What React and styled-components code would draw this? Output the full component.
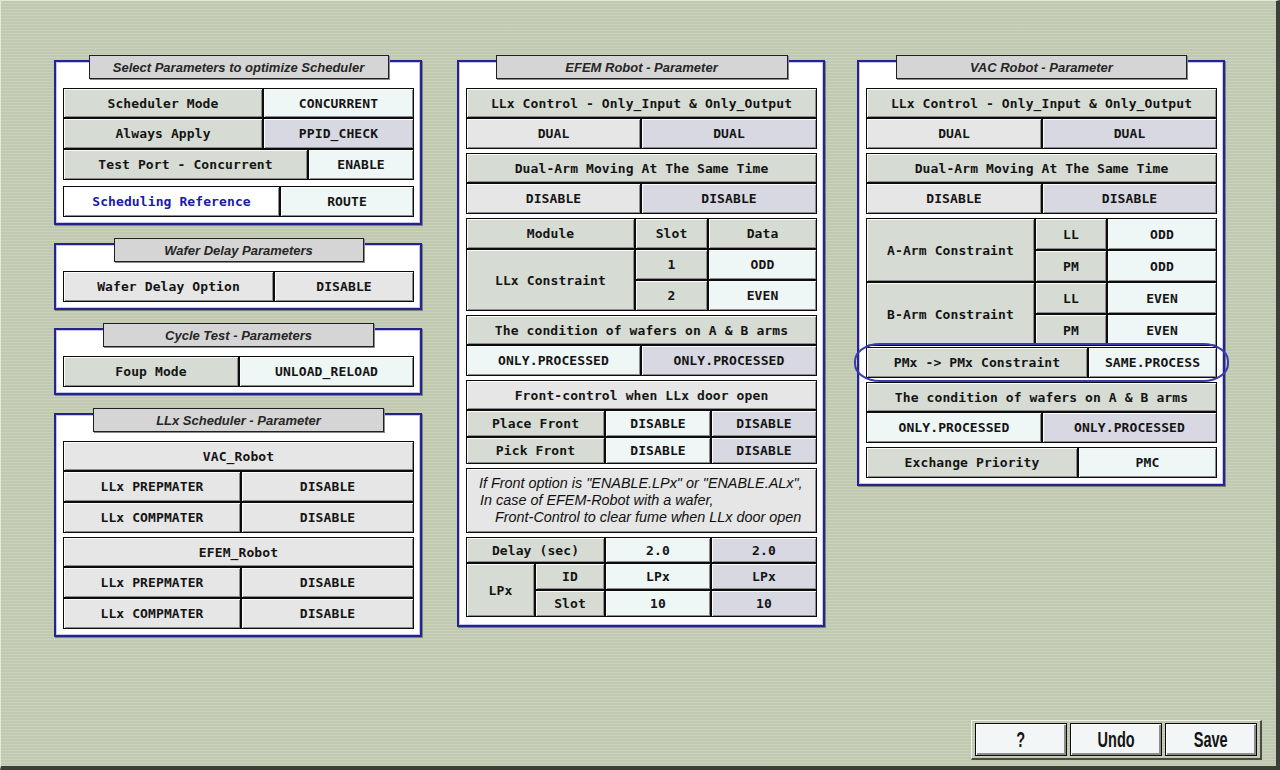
import React from 'react';
import styled, { createGlobalStyle } from 'styled-components';

const GlobalStyle = createGlobalStyle`
    html, body {
        margin: 0;
        padding: 0;
        background: #c6cfb6;
    }
    * {
        box-sizing: border-box;
    }
`;

// 셀 배경색
const tones = {
    label: '#d6dcd3',
    cyan: '#eef6f6',
    lav: '#d8d8e2',
    gray: '#e6e6e6',
    white: '#ffffff',
};

const App = () => {
    return (
        <>
            <GlobalStyle />
            <Screen>
                <Columns>
                    <Column>
                        <Panel>
                            <Tab $w={300}>Select Parameters to optimize Scheduler</Tab>
                            <Stack $gap={6}>
                                <div>
                                    <Row $cols="200px 1fr" $h={30}>
                                        <Cell $tone="label">Scheduler Mode</Cell>
                                        <Cell $tone="cyan">CONCURRENT</Cell>
                                    </Row>
                                    <Row $cols="200px 1fr">
                                        <Cell $tone="label">Always Apply</Cell>
                                        <Cell $tone="lav">PPID_CHECK</Cell>
                                    </Row>
                                    <Row $cols="245px 1fr">
                                        <Cell $tone="label">Test Port - Concurrent</Cell>
                                        <Cell $tone="cyan">ENABLE</Cell>
                                    </Row>
                                </div>
                                <Row $cols="217px 1fr">
                                    <Cell $tone="white" $blue>Scheduling Reference</Cell>
                                    <Cell $tone="cyan">ROUTE</Cell>
                                </Row>
                            </Stack>
                        </Panel>

                        <Panel>
                            <Tab $w={250}>Wafer Delay Parameters</Tab>
                            <Row $cols="211px 1fr">
                                <Cell $tone="gray">Wafer Delay Option</Cell>
                                <Cell $tone="gray">DISABLE</Cell>
                            </Row>
                        </Panel>

                        <Panel>
                            <Tab $w={271}>Cycle Test - Parameters</Tab>
                            <Row $cols="176px 1fr">
                                <Cell $tone="label">Foup Mode</Cell>
                                <Cell $tone="cyan">UNLOAD_RELOAD</Cell>
                            </Row>
                        </Panel>

                        <Panel>
                            <Tab $w={291}>LLx Scheduler - Parameter</Tab>
                            <Stack $gap={4}>
                                {['VAC_Robot', 'EFEM_Robot'].map((name) => (
                                    <div key={name}>
                                        <Row $h={30}>
                                            <Cell $tone="gray">{name}</Cell>
                                        </Row>
                                        <Row $cols="178px 1fr">
                                            <Cell $tone="gray">LLx PREPMATER</Cell>
                                            <Cell $tone="gray">DISABLE</Cell>
                                        </Row>
                                        <Row $cols="178px 1fr">
                                            <Cell $tone="gray">LLx COMPMATER</Cell>
                                            <Cell $tone="gray">DISABLE</Cell>
                                        </Row>
                                    </div>
                                ))}
                            </Stack>
                        </Panel>
                    </Column>

                    <Column $offset={35}>
                        <Panel $pb={8}>
                            <Tab $w={292}>EFEM Robot - Parameter</Tab>
                            <Stack $gap={4}>
                                <div>
                                    <Row $h={30}>
                                        <Cell $tone="label">LLx Control - Only_Input &amp; Only_Output</Cell>
                                    </Row>
                                    <Row $cols="175px 1fr">
                                        <Cell $tone="gray">DUAL</Cell>
                                        <Cell $tone="lav">DUAL</Cell>
                                    </Row>
                                </div>
                                <div>
                                    <Row $h={30}>
                                        <Cell $tone="label">Dual-Arm Moving At The Same Time</Cell>
                                    </Row>
                                    <Row $cols="175px 1fr">
                                        <Cell $tone="gray">DISABLE</Cell>
                                        <Cell $tone="lav">DISABLE</Cell>
                                    </Row>
                                </div>
                                <Table $cols="169px 73px 1fr" $rows="31px 31px 31px">
                                    <Cell $tone="label">Module</Cell>
                                    <Cell $tone="label">Slot</Cell>
                                    <Cell $tone="label">Data</Cell>
                                    <Cell $tone="label" $span={2}>LLx Constraint</Cell>
                                    <Cell $tone="label">1</Cell>
                                    <Cell $tone="cyan">ODD</Cell>
                                    <Cell $tone="label">2</Cell>
                                    <Cell $tone="cyan">EVEN</Cell>
                                </Table>
                                <div>
                                    <Row $h={30}>
                                        <Cell $tone="label">The condition of wafers on A &amp; B arms</Cell>
                                    </Row>
                                    <Row $cols="175px 1fr">
                                        <Cell $tone="cyan">ONLY.PROCESSED</Cell>
                                        <Cell $tone="lav">ONLY.PROCESSED</Cell>
                                    </Row>
                                </div>
                                <div>
                                    <Row $h={30}>
                                        <Cell $tone="gray">Front-control when LLx door open</Cell>
                                    </Row>
                                    <Table $cols="139px 106px 1fr" $rows="27px 27px">
                                        <Cell $tone="label">Place Front</Cell>
                                        <Cell $tone="cyan">DISABLE</Cell>
                                        <Cell $tone="lav">DISABLE</Cell>
                                        <Cell $tone="label">Pick Front</Cell>
                                        <Cell $tone="cyan">DISABLE</Cell>
                                        <Cell $tone="lav">DISABLE</Cell>
                                    </Table>
                                </div>
                                <Note>
                                    <NoteLine $indent={12}>If Front option is "ENABLE.LPx" or "ENABLE.ALx",</NoteLine>
                                    <NoteLine $indent={13}>In case of EFEM-Robot with a wafer,</NoteLine>
                                    <NoteLine $indent={28}>Front-Control to clear fume when LLx door open</NoteLine>
                                </Note>
                                <Table $cols="69px 70px 106px 1fr" $rows="26px 27px 27px">
                                    <Cell $tone="label" $cspan={2}>Delay (sec)</Cell>
                                    <Cell $tone="cyan">2.0</Cell>
                                    <Cell $tone="lav">2.0</Cell>
                                    <Cell $tone="label" $span={2}>LPx</Cell>
                                    <Cell $tone="label">ID</Cell>
                                    <Cell $tone="cyan">LPx</Cell>
                                    <Cell $tone="lav">LPx</Cell>
                                    <Cell $tone="label">Slot</Cell>
                                    <Cell $tone="cyan">10</Cell>
                                    <Cell $tone="lav">10</Cell>
                                </Table>
                            </Stack>
                        </Panel>
                    </Column>

                    <Column $offset={32}>
                        <Panel>
                            <Tab $w={291}>VAC Robot - Parameter</Tab>
                            <Stack $gap={4}>
                                <div>
                                    <Row $h={30}>
                                        <Cell $tone="label">LLx Control - Only_Input &amp; Only_Output</Cell>
                                    </Row>
                                    <Row $cols="176px 1fr">
                                        <Cell $tone="gray">DUAL</Cell>
                                        <Cell $tone="lav">DUAL</Cell>
                                    </Row>
                                </div>
                                <div>
                                    <Row $h={30}>
                                        <Cell $tone="label">Dual-Arm Moving At The Same Time</Cell>
                                    </Row>
                                    <Row $cols="176px 1fr">
                                        <Cell $tone="gray">DISABLE</Cell>
                                        <Cell $tone="lav">DISABLE</Cell>
                                    </Row>
                                </div>
                                <Stack $gap={1}>
                                    <Table $cols="169px 72px 1fr" $rows="32px 32px 32px 32px">
                                        <Cell $tone="label" $span={2}>A-Arm Constraint</Cell>
                                        <Cell $tone="label">LL</Cell>
                                        <Cell $tone="cyan">ODD</Cell>
                                        <Cell $tone="label">PM</Cell>
                                        <Cell $tone="cyan">ODD</Cell>
                                        <Cell $tone="label" $span={2}>B-Arm Constraint</Cell>
                                        <Cell $tone="label">LL</Cell>
                                        <Cell $tone="cyan">EVEN</Cell>
                                        <Cell $tone="label">PM</Cell>
                                        <Cell $tone="cyan">EVEN</Cell>
                                    </Table>
                                    <Highlight>
                                        <Row $cols="222px 1fr">
                                            <Cell $tone="label">PMx -&gt; PMx Constraint</Cell>
                                            <Cell $tone="cyan">SAME.PROCESS</Cell>
                                        </Row>
                                    </Highlight>
                                </Stack>
                                <div>
                                    <Row $h={30}>
                                        <Cell $tone="label">The condition of wafers on A &amp; B arms</Cell>
                                    </Row>
                                    <Row $cols="176px 1fr">
                                        <Cell $tone="cyan">ONLY.PROCESSED</Cell>
                                        <Cell $tone="lav">ONLY.PROCESSED</Cell>
                                    </Row>
                                </div>
                                <Row $cols="212px 1fr">
                                    <Cell $tone="label">Exchange Priority</Cell>
                                    <Cell $tone="cyan">PMC</Cell>
                                </Row>
                            </Stack>
                        </Panel>
                    </Column>
                </Columns>

                <ButtonBar>
                    <Button><Narrow>?</Narrow></Button>
                    <Button><Narrow>Undo</Narrow></Button>
                    <Button><Narrow>Save</Narrow></Button>
                </ButtonBar>
            </Screen>
        </>
    );
};

export default App;

// Styled Components
const Screen = styled.div`
    width: 1280px;
    height: 770px;
    display: flex;
    flex-direction: column;
    background-color: #c6cfb6;
    background-image: repeating-linear-gradient(
        0deg,
        rgba(255, 255, 255, 0.06) 0px,
        rgba(255, 255, 255, 0.06) 1px,
        rgba(0, 0, 0, 0.03) 1px,
        rgba(0, 0, 0, 0.03) 3px
    );
    border-top: 1px solid #e4ead8;
    border-left: 1px solid #e4ead8;
    border-right: 4px solid #3c3f38;
    border-bottom: 4px solid #3c3f38;
    overflow: hidden;
`;

const Columns = styled.div`
    display: flex;
    align-items: flex-start;
    padding: 59px 0 0 53px;
`;

const Column = styled.div`
    display: flex;
    flex-direction: column;
    gap: 18px;
    margin-left: ${(p) => p.$offset || 0}px;
`;

const Panel = styled.section`
    width: 368px;
    background: #ffffff;
    border: 2px solid #24248c;
    box-shadow: inset 0 0 0 1px #c4c4ec, 1px 1px 0 #7d8574;
    padding: 0 6px ${(p) => p.$pb || 6}px 7px;
    display: flex;
    flex-direction: column;
`;

const Tab = styled.div`
    width: ${(p) => p.$w}px;
    height: 24px;
    margin: -7px auto 9px;
    display: flex;
    align-items: center;
    justify-content: center;
    background: #d5d5d5;
    border: 1px solid #202020;
    box-shadow: 1px 1px 0 #8a8a8a;
    font-family: 'Liberation Sans', Arial, sans-serif;
    font-style: italic;
    font-weight: bold;
    font-size: 13px;
    color: #262626;
    white-space: nowrap;
`;

const Stack = styled.div`
    display: flex;
    flex-direction: column;
    gap: ${(p) => p.$gap}px;
`;

const Row = styled.div`
    display: grid;
    grid-template-columns: ${(p) => p.$cols || '1fr'};
    grid-auto-rows: ${(p) => p.$h || 31}px;
`;

const Table = styled.div`
    display: grid;
    grid-template-columns: ${(p) => p.$cols};
    grid-template-rows: ${(p) => p.$rows};
`;

const Cell = styled.div`
    display: flex;
    align-items: center;
    justify-content: center;
    min-width: 0;
    grid-row: ${(p) => (p.$span ? `span ${p.$span}` : 'auto')};
    grid-column: ${(p) => (p.$cspan ? `span ${p.$cspan}` : 'auto')};
    background: ${(p) => tones[p.$tone]};
    border: 1px solid #0c0c0c;
    box-shadow: inset 1px 1px 0 #fbfbfb, inset -1px -1px 0 #8d8d8d;
    font-family: 'DejaVu Sans Mono', 'Liberation Mono', monospace;
    font-weight: bold;
    font-size: 13px;
    letter-spacing: 0.1px;
    color: ${(p) => (p.$blue ? '#1a1aa8' : '#141414')};
    white-space: pre;
`;

const Note = styled.div`
    height: 65px;
    display: flex;
    flex-direction: column;
    justify-content: center;
    background: #e6e6e6;
    border: 1px solid #0c0c0c;
    box-shadow: inset 1px 1px 0 #fbfbfb, inset -1px -1px 0 #8d8d8d;
    font-family: 'Liberation Sans', Arial, sans-serif;
    font-style: italic;
    font-size: 14.4px;
    line-height: 17px;
    color: #101010;
`;

const NoteLine = styled.div`
    padding-left: ${(p) => p.$indent}px;
    white-space: nowrap;
`;

const Highlight = styled.div`
    position: relative;

    &::after {
        content: '';
        position: absolute;
        left: -12px;
        right: -12px;
        top: -4px;
        bottom: -4px;
        border: 2px solid #3c3cb2;
        border-radius: 26px / 18px;
        pointer-events: none;
    }
`;

const ButtonBar = styled.div`
    margin: auto 14px 6px auto;
    display: flex;
    gap: 3px;
    padding: 2px 3px;
    border-top: 1px solid #f2f4ec;
    border-left: 1px solid #f2f4ec;
    border-right: 2px solid #4a4c44;
    border-bottom: 2px solid #4a4c44;
`;

const Button = styled.button`
    width: 92px;
    height: 33px;
    padding: 0;
    display: flex;
    align-items: center;
    justify-content: center;
    background: #f2f6f6;
    border: 1px solid #0c0c0c;
    box-shadow: inset 1px 1px 0 #ffffff, inset -2px -2px 0 #8d8d8d;
    font-family: 'Liberation Sans', Arial, sans-serif;
    font-weight: bold;
    font-size: 22px;
    color: #141414;
    cursor: pointer;
`;

// 좁은 글꼴 대신 가로로 축소
const Narrow = styled.span`
    display: inline-block;
    transform: scaleX(0.66);
`;
